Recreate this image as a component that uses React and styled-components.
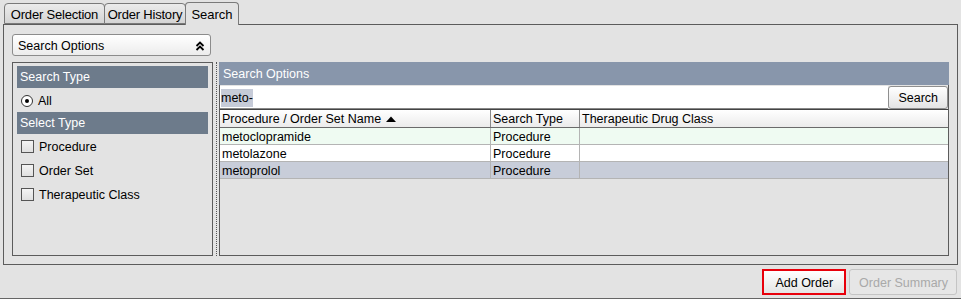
import React from "react"
import styled, { createGlobalStyle } from "styled-components"

const GlobalStyle = createGlobalStyle`
  html, body {
    margin: 0;
    padding: 0;
    background: #e3e3e3;
  }
  body {
    font-family: "Liberation Sans", Arial, sans-serif;
    font-size: 12px;
    color: #000;
  }
`

const rows = [
  { name: "metoclopramide", type: "Procedure", drugClass: "", tone: "mint" },
  { name: "metolazone", type: "Procedure", drugClass: "", tone: "white" },
  { name: "metoprolol", type: "Procedure", drugClass: "", tone: "selected" },
]

const App = () => (
  <Page>
    <GlobalStyle />
    <TabBar>
      <Tab width={101}>Order Selection</Tab>
      <Tab width={82}>Order History</Tab>
      <Tab width={54} active>Search</Tab>
    </TabBar>
    <MainPanel>
      <Dropdown>
        <span>Search Options</span>
        <svg width="10" height="10" viewBox="0 0 10 10">
          <path d="M1.5 5 L5 1.5 L8.5 5 M1.5 9 L5 5.5 L8.5 9" stroke="#000" strokeWidth="1.8" fill="none" />
        </svg>
      </Dropdown>
      <Body>
        <SidePanel>
          <SideHeader>Search Type</SideHeader>
          <OptionRow>
            <Radio checked />
            All
          </OptionRow>
          <SideHeader>Select Type</SideHeader>
          <OptionRow>
            <Check />
            Procedure
          </OptionRow>
          <OptionRow>
            <Check />
            Order Set
          </OptionRow>
          <OptionRow>
            <Check />
            Therapeutic Class
          </OptionRow>
        </SidePanel>
        <Splitter />
        <ResultsPanel>
          <ResultsHeader>Search Options</ResultsHeader>
          <SearchRow>
            <SearchInput>
              <Selected>meto-</Selected>
            </SearchInput>
            <Button>Search</Button>
          </SearchRow>
          <Table>
            <HeadRow>
              <HeadCell>
                Procedure / Order Set Name
                <svg width="10" height="7" viewBox="0 0 10 7" style={{ marginLeft: 5 }}>
                  <path d="M0 6 L5 0.5 L10 6 Z" fill="#000" />
                </svg>
              </HeadCell>
              <HeadCell>Search Type</HeadCell>
              <HeadCell last>Therapeutic Drug Class</HeadCell>
            </HeadRow>
            {rows.map(r => (
              <DataRow key={r.name} tone={r.tone}>
                <Cell>{r.name}</Cell>
                <Cell>{r.type}</Cell>
                <Cell last>{r.drugClass}</Cell>
              </DataRow>
            ))}
          </Table>
        </ResultsPanel>
      </Body>
    </MainPanel>
    <Footer>
      <Button focused>Add Order</Button>
      <Button disabled>Order Summary</Button>
    </Footer>
  </Page>
)

export default App

const Page = styled.div`
  width: 961px;
  height: 299px;
  box-sizing: border-box;
  border-bottom: 1px solid #666;
  display: flex;
  flex-direction: column;
`

const TabBar = styled.div`
  height: 24px;
  padding-left: 4px;
  display: flex;
  align-items: flex-end;
  position: relative;
  z-index: 1;
`

const Tab = styled.div`
  box-sizing: border-box;
  width: ${p => p.width}px;
  height: ${p => (p.active ? "23px" : "21px")};
  margin-bottom: ${p => (p.active ? "-1px" : "0")};
  padding-top: ${p => (p.active ? "4px" : "3px")};
  text-align: center;
  white-space: nowrap;
  border: 1px solid #7a7a7a;
  border-bottom: ${p => (p.active ? "none" : "1px solid #7a7a7a")};
  border-radius: 4px 4px 0 0;
  background: ${p => (p.active ? "#e3e3e3" : "linear-gradient(#ececec, #d4d4d4)")};
  font-size: 13px;
  line-height: 15px;
  letter-spacing: ${p => (p.active ? "0" : "-0.2px")};
  & + & {
    margin-left: -1px;
  }
`

const MainPanel = styled.div`
  margin: 0 3px;
  height: 241px;
  box-sizing: border-box;
  border: 1px solid #5c5c5c;
  padding: 9px 8px 8px 8px;
  display: flex;
  flex-direction: column;
`

const Dropdown = styled.div`
  width: 199px;
  height: 22px;
  box-sizing: border-box;
  border: 1px solid #8c8c8c;
  border-radius: 3px;
  background: linear-gradient(#ffffff, #ececec);
  display: flex;
  align-items: center;
  justify-content: space-between;
  padding: 1px 5px 0 5px;
  font-size: 12.5px;
`

const Body = styled.div`
  margin-top: 6px;
  flex: 1;
  display: flex;
`

const SidePanel = styled.div`
  width: 201px;
  box-sizing: border-box;
  border: 1px solid #5c5c5c;
  padding: 3px 4px;
  display: flex;
  flex-direction: column;
`

const SideHeader = styled.div`
  height: 22px;
  background: #6d7b8b;
  color: #fff;
  font-size: 12.5px;
  line-height: 23px;
  padding-left: 3px;
`

const OptionRow = styled.div`
  height: 24px;
  display: flex;
  align-items: center;
  padding: 1px 0 0 4px;
  box-sizing: border-box;
  font-size: 12.5px;
`

const Radio = styled.span`
  width: 12px;
  height: 12px;
  box-sizing: border-box;
  border: 1px solid #333;
  border-radius: 50%;
  background: #fff;
  margin-right: 5px;
  position: relative;
  &::after {
    content: "";
    position: absolute;
    left: 3px;
    top: 3px;
    width: 4px;
    height: 4px;
    border-radius: 50%;
    background: #000;
    display: ${p => (p.checked ? "block" : "none")};
  }
`

const Check = styled.span`
  width: 13px;
  height: 13px;
  box-sizing: border-box;
  border: 1px solid #555;
  background: linear-gradient(#f4f4f4, #e0e0e0);
  margin-right: 5px;
`

const Splitter = styled.div`
  width: 6px;
  display: flex;
  justify-content: center;
  &::before {
    content: "";
    width: 0;
    border-left: 1px dotted #555;
  }
`

const ResultsPanel = styled.div`
  flex: 1;
  box-sizing: border-box;
  border: 1px solid #5c5c5c;
  border-top: none;
  display: flex;
  flex-direction: column;
`

const ResultsHeader = styled.div`
  height: 23px;
  background: #8896ab;
  color: #fff;
  font-size: 12.5px;
  line-height: 24px;
  padding-left: 4px;
  margin: 0 -1px 0 -1px;
`

const SearchRow = styled.div`
  display: flex;
  height: 23px;
  margin-top: 1px;
`

const SearchInput = styled.div`
  flex: 1;
  background: #fff;
  border-bottom: 1px solid #888;
  padding: 1px 0 0 1px;
  display: flex;
  align-items: center;
  font-size: 12.5px;
`

const Selected = styled.span`
  background: #c6cbd8;
  padding: 2px 0;
`

const Button = styled.button`
  font-family: inherit;
  font-size: 12.5px;
  box-sizing: border-box;
  height: ${p => (p.focused || p.disabled ? "26px" : "23px")};
  padding: ${p => (p.focused ? "1px 11px 0" : p.disabled ? "1px 8px 0 9px" : "1px 9px 0")};
  border: ${p => (p.focused ? "2px solid #e8000b" : "1px solid #8f8f8f")};
  border-color: ${p => (p.disabled ? "#c4c4c4" : p.focused ? "#e8000b" : "#8f8f8f")};
  border-radius: ${p => (p.focused ? "0" : "3px")};
  background: ${p => (p.disabled ? "#e6e6e6" : "linear-gradient(#ffffff, #e4e4e4)")};
  color: ${p => (p.disabled ? "#a9a9a9" : "#000")};
  cursor: default;
`

const Table = styled.div`
  flex: 1;
  display: flex;
  flex-direction: column;
  border-top: 1px solid #444;
`

const HeadRow = styled.div`
  display: grid;
  grid-template-columns: 271px 89px 1fr;
  height: 17px;
  background: linear-gradient(#ffffff, #ebebeb);
  border-bottom: 1px solid #6a6a6a;
`

const HeadCell = styled.div`
  display: flex;
  align-items: center;
  padding: 1px 0 0 2px;
  border-right: ${p => (p.last ? "none" : "1px solid #8a8a8a")};
  font-size: 12.5px;
`

const toneColors = {
  mint: "#effbf2",
  white: "#ffffff",
  selected: "#c8cdd9",
}

const DataRow = styled.div`
  display: grid;
  grid-template-columns: 271px 89px 1fr;
  height: 16px;
  background: ${p => toneColors[p.tone]};
  border-bottom: 1px solid #b4b4b4;
`

const Cell = styled.div`
  display: flex;
  align-items: center;
  padding: 1px 0 0 2px;
  border-right: ${p => (p.last ? "none" : "1px solid #b4b4b4")};
  font-size: 12.5px;
`

const Footer = styled.div`
  display: flex;
  justify-content: flex-end;
  gap: 3px;
  padding: 4px 4px 0 0;
`
